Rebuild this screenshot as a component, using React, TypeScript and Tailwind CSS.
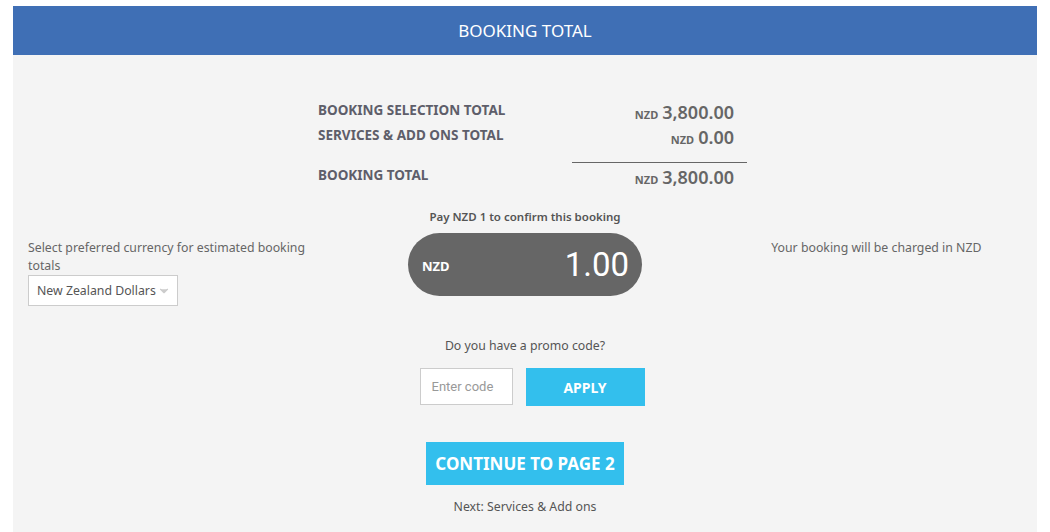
import { ChevronDown } from "lucide-react";

const FONT = "font-['Noto_Sans','DejaVu_Sans',sans-serif]";

const ROWS = [
  { label: "BOOKING SELECTION TOTAL", value: "3,800.00" },
  { label: "SERVICES & ADD ONS TOTAL", value: "0.00" },
];

function Amount({ value }: { value: string }) {
  return (
    <span className="flex items-baseline justify-end gap-1 pt-[3px] pr-[13px] text-[#666]">
      <span className="text-[11px] font-bold">NZD</span>
      <span className="text-[18px] font-semibold">{value}</span>
    </span>
  );
}

export default function App() {
  return (
    <div className={`min-h-[532px] bg-white px-[13px] pt-[6px] ${FONT}`}>
      <div className="flex h-[49px] items-center justify-center bg-[#3f6fb5] text-[17px] text-white">
        BOOKING TOTAL
      </div>

      <div className="min-h-[477px] bg-[#f4f4f4] px-[15px] pb-4">
        {/* totals */}
        <div className="ml-[290px] w-[429px] pt-[43px]">
          {ROWS.map((r) => (
            <div key={r.label} className="flex h-[25px] items-center justify-between">
              <span className="text-[13.5px] font-bold text-[#5e5e6a]">{r.label}</span>
              <Amount value={r.value} />
            </div>
          ))}
          <div className="mt-[14px] ml-[254px] border-t border-[#666]" />
          <div className="flex h-[25px] items-center justify-between">
            <span className="text-[13.5px] font-bold text-[#5e5e6a]">BOOKING TOTAL</span>
            <Amount value="3,800.00" />
          </div>
        </div>

        {/* currency row */}
        <div className="mt-[20px] grid grid-cols-3 items-start gap-[30px]">
          <div className="pt-[31px] text-[12.3px] leading-[18px] text-[#666]">
            <p>Select preferred currency for estimated booking totals</p>
            <div className="flex h-[31px] w-[150px] items-center justify-between border border-[#ccc] bg-white pl-[8px] pr-[6px] text-[#555]">
              <span className="whitespace-nowrap">New Zealand Dollars</span>
              <ChevronDown size={14} className="fill-[#ccc] text-[#ccc]" />
            </div>
          </div>

          <div className="flex flex-col items-center">
            <p className="text-[11.5px] font-semibold text-[#555]">Pay NZD 1 to confirm this booking</p>
            <div className="mt-[8px] flex h-[63px] w-[234px] items-center justify-between rounded-full bg-[#666] pl-[14px] pr-[13px] text-white">
              <span className="pt-[4px] text-[13px] font-bold">NZD</span>
              <span className="font-['Roboto',sans-serif] text-[33px]">1.00</span>
            </div>
          </div>

          <div className="pt-[31px] pl-[20px] text-center text-[12.3px] leading-[18px] text-[#666]">
            Your booking will be charged in NZD
          </div>
        </div>

        {/* promo */}
        <div className="mt-[31px] flex flex-col items-center">
          <p className="text-[12.3px] text-[#555]">Do you have a promo code?</p>
          <div className="mt-[13px] ml-[14px] flex gap-[13px]">
            <input
              placeholder="Enter code"
              className="h-[37px] w-[93px] border border-[#ccc] bg-white px-[11px] font-['Roboto',sans-serif] text-[13px] text-[#555] placeholder:text-[#999] outline-none"
            />
            <button className="h-[38px] w-[119px] bg-[#33bfed] text-[14px] font-bold text-white">APPLY</button>
          </div>
          <button className="mt-[36px] h-[43px] w-[198px] bg-[#33bfed] text-[17px] font-bold text-white">
            CONTINUE TO PAGE 2
          </button>
          <p className="mt-[13px] text-[12.3px] text-[#555]">Next: Services &amp; Add ons</p>
        </div>
      </div>
    </div>
  );
}
